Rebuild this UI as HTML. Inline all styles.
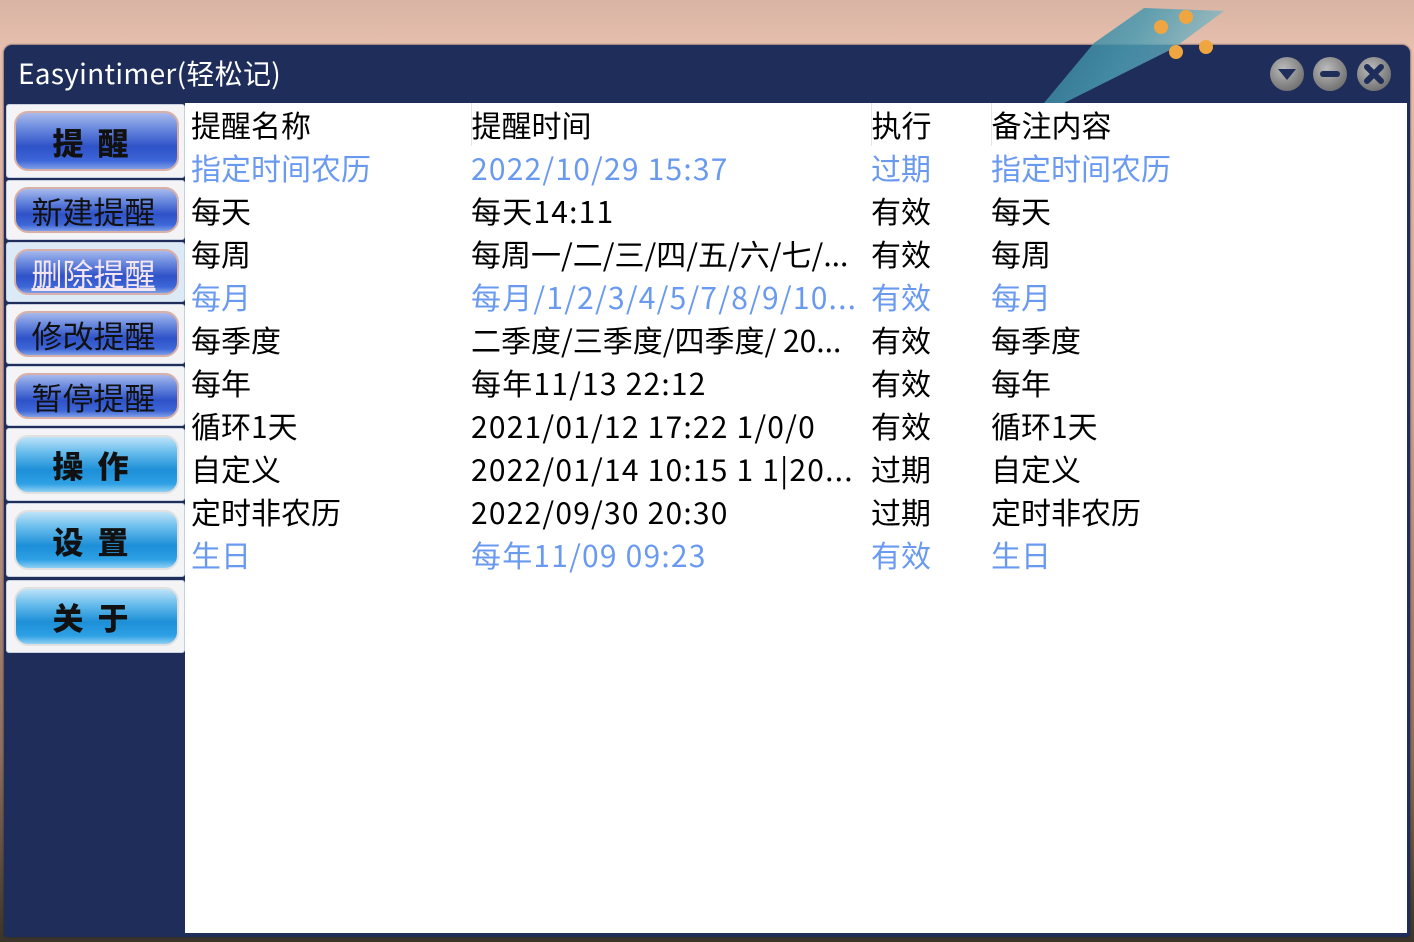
<!DOCTYPE html>
<html><head><meta charset="utf-8"><style>
*{margin:0;padding:0;box-sizing:border-box}
body{width:1414px;height:942px;overflow:hidden;position:relative;font-family:"Noto Sans CJK SC",sans-serif;
background:linear-gradient(180deg,#d9b3a3 0%,#e6bfae 5%,#cfa597 40%,#8d6e5e 80%,#3a342a 100%);}
.win{position:absolute;left:4px;top:45px;width:1406px;height:892px;background:#1e2d5a;border-radius:8px 8px 3px 3px;box-shadow:0 0 2px #223}
.title{position:absolute;left:14px;top:12px;color:#fff;font-size:28px;font-family:"Noto Sans CJK SC",sans-serif;line-height:32px;letter-spacing:0.3px}
.leaf{position:absolute;left:1020px;top:-42px;width:200px;height:100px;background:linear-gradient(120deg,#2a6f8a,#4a9ab0 50%,rgba(160,210,220,.7));clip-path:polygon(10% 100%,35% 40%,60% 5%,100% 8%,75% 45%,45% 75%,20% 100%);opacity:.85}
.fl{position:absolute;width:14px;height:14px;background:#f0a640;border-radius:50%}
.ctl{position:absolute;top:12px;width:34px;height:34px;border-radius:50%;background:radial-gradient(circle at 40% 35%,#bbb,#777 70%,#555);}
.content{position:absolute;left:185px;top:103px;width:1222px;height:830px;background:#fff}
.side{position:absolute;left:5px;top:103px;width:180px}
.btn{position:absolute;left:1px;width:179px;background:#f4f4f6;border:1px solid #c8d0e0;border-radius:3px}
.pill{position:absolute;left:7px;right:5px;top:6px;bottom:6px;border-radius:14px;border:2px solid #d8b0a8;
background:linear-gradient(180deg,#a8b8ec 0%,#6f8ee0 25%,#2f52c8 60%,#3d66d8 85%,#7e9ee8 100%);display:flex;align-items:center;justify-content:center;font-size:31px;color:#111;font-family:"Noto Sans CJK SC",sans-serif;padding-right:6px}
.b2 .pill{border-color:#e0e0e0;background:linear-gradient(180deg,#bfe3f8 0%,#6fc0ee 25%,#1d8fd8 60%,#2ea0e4 85%,#8fd0f4 100%)}
.bold{font-weight:900;letter-spacing:14px;padding-left:8px}
table{position:absolute;left:6px;top:0;border-collapse:collapse;font-size:30px;font-family:"Noto Sans CJK SC",sans-serif}
td{height:43px;padding:0;line-height:43px;white-space:nowrap;vertical-align:middle;color:#000}
td.n{letter-spacing:1.2px}
tr.h td{border-right:1px solid #e4e4e4}
tr.b td{color:#6a9af0}
</style></head><body>
<div class="win">
<div class="leaf"></div>
<div class="fl" style="left:1150px;top:-25px"></div><div class="fl" style="left:1175px;top:-35px"></div><div class="fl" style="left:1165px;top:0px"></div><div class="fl" style="left:1195px;top:-5px"></div>
<div class="title">Easyintimer(轻松记)</div>
<div class="ctl" style="left:1266px"><svg width="34" height="34"><path d="M8 12h18l-9 11z" fill="#1e2d5a"/></svg></div>
<div class="ctl" style="left:1309px"><svg width="34" height="34"><rect x="7" y="14" width="20" height="6" rx="3" fill="#1e2d5a"/></svg></div>
<div class="ctl" style="left:1353px"><svg width="34" height="34"><path d="M10 10L24 24M24 10L10 24" stroke="#1e2d5a" stroke-width="6" stroke-linecap="round"/></svg></div>
</div>
<div class="side">
<div class="btn" style="top:1px;height:74px"><div class="pill bold">提醒</div></div>
<div class="btn" style="top:77px;height:60px"><div class="pill">新建提醒</div></div>
<div class="btn" style="top:139px;height:60px;background:#dceaf8"><div class="pill" style="color:#f4e6f0;text-decoration:underline">删除提醒</div></div>
<div class="btn" style="top:201px;height:60px"><div class="pill">修改提醒</div></div>
<div class="btn" style="top:263px;height:60px"><div class="pill">暂停提醒</div></div>
<div class="btn b2" style="top:325px;height:73px"><div class="pill bold">操作</div></div>
<div class="btn b2" style="top:400px;height:74px"><div class="pill bold">设置</div></div>
<div class="btn b2" style="top:477px;height:73px"><div class="pill bold">关于</div></div>
</div>
<div class="content">
<table>
<colgroup><col style="width:280px"><col style="width:400px"><col style="width:120px"><col style="width:300px"></colgroup>
<tr class="h"><td>提醒名称</td><td>提醒时间</td><td>执行</td><td style="border:none">备注内容</td></tr>
<tr class="b"><td>指定时间农历</td><td class="n">2022/10/29 15:37</td><td>过期</td><td>指定时间农历</td></tr>
<tr><td>每天</td><td class="n">每天14:11</td><td>有效</td><td>每天</td></tr>
<tr><td>每周</td><td>每周一/二/三/四/五/六/七/...</td><td>有效</td><td>每周</td></tr>
<tr class="b"><td>每月</td><td class="n">每月/1/2/3/4/5/7/8/9/10...</td><td>有效</td><td>每月</td></tr>
<tr><td>每季度</td><td>二季度/三季度/四季度/ 20...</td><td>有效</td><td>每季度</td></tr>
<tr><td>每年</td><td class="n">每年11/13 22:12</td><td>有效</td><td>每年</td></tr>
<tr><td>循环1天</td><td class="n">2021/01/12 17:22 1/0/0</td><td>有效</td><td>循环1天</td></tr>
<tr><td>自定义</td><td class="n">2022/01/14 10:15 1 1|20...</td><td>过期</td><td>自定义</td></tr>
<tr><td>定时非农历</td><td class="n">2022/09/30 20:30</td><td>过期</td><td>定时非农历</td></tr>
<tr class="b"><td>生日</td><td class="n">每年11/09 09:23</td><td>有效</td><td>生日</td></tr>
</table>
</div>
</body></html>
